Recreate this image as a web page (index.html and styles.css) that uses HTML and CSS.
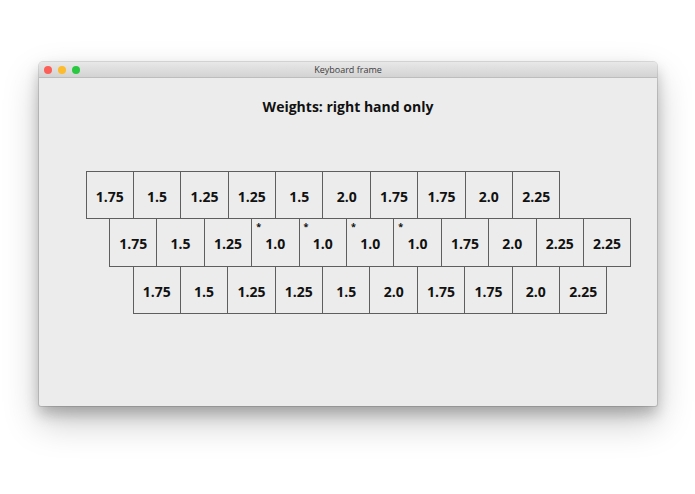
FILE: index.html
```html
<!DOCTYPE html>
<html lang="en">
<head>
  <meta charset="UTF-8">
  <meta name="viewport" content="width=device-width, initial-scale=1.0">
  <title>Keyboard frame</title>
  <link rel="stylesheet" href="styles.css">
</head>
<body>
  <div class="window">
    <div class="titlebar">
      <div class="lights">
        <span class="light red"></span>
        <span class="light yellow"></span>
        <span class="light green"></span>
      </div>
      <div class="window-title">Keyboard frame</div>
    </div>

    <div class="content">
      <div class="heading">Weights: right hand only</div>

      <div class="keyboard">
        <!-- Top row -->
        <div class="row">
          <div class="key">1.75</div>
          <div class="key">1.5</div>
          <div class="key">1.25</div>
          <div class="key">1.25</div>
          <div class="key">1.5</div>
          <div class="key">2.0</div>
          <div class="key">1.75</div>
          <div class="key">1.75</div>
          <div class="key">2.0</div>
          <div class="key">2.25</div>
        </div>

        <!-- Home row -->
        <div class="row home">
          <div class="key">1.75</div>
          <div class="key">1.5</div>
          <div class="key">1.25</div>
          <div class="key marked">1.0</div>
          <div class="key marked">1.0</div>
          <div class="key marked">1.0</div>
          <div class="key marked">1.0</div>
          <div class="key">1.75</div>
          <div class="key">2.0</div>
          <div class="key">2.25</div>
          <div class="key">2.25</div>
        </div>

        <!-- Bottom row -->
        <div class="row bottom">
          <div class="key">1.75</div>
          <div class="key">1.5</div>
          <div class="key">1.25</div>
          <div class="key">1.25</div>
          <div class="key">1.5</div>
          <div class="key">2.0</div>
          <div class="key">1.75</div>
          <div class="key">1.75</div>
          <div class="key">2.0</div>
          <div class="key">2.25</div>
        </div>
      </div>
    </div>
  </div>
</body>
</html>
```

FILE: styles.css
```css
/* Page */
html,
body {
  background-color: #ffffff;
}

body {
  margin: 0;
  padding: 0 0 88px 0;
  font-family: "Open Sans", "DejaVu Sans", sans-serif;
  color: #111;
}

/* Window frame */
.window {
  width: 618px;
  height: 344px;
  margin: 62px 0 0 39px;
  background-color: #ececec;
  border-radius: 4px 4px 2px 2px;
  box-shadow: 0 0 0 1px rgba(0, 0, 0, 0.12),
    0 8px 14px rgba(0, 0, 0, 0.22),
    0 16px 36px rgba(0, 0, 0, 0.22);
  display: flex;
  flex-direction: column;
  overflow: hidden;
}

.titlebar {
  height: 15px;
  background: linear-gradient(#e9e8e9, #d4d3d4);
  border-bottom: 1px solid #bdbdbd;
  display: flex;
  align-items: center;
  justify-content: center;
  position: relative;
}

.lights {
  position: absolute;
  left: 5px;
  top: 4px;
  display: flex;
  gap: 6px;
}

.light {
  width: 8px;
  height: 8px;
  border-radius: 50%;
}

.light.red {
  background-color: #fc5f57;
}

.light.yellow {
  background-color: #fdbb2e;
}

.light.green {
  background-color: #2ac840;
}

.window-title {
  font-size: 9px;
  color: #3c3c3c;
  line-height: 15px;
}

/* Content */
.content {
  flex: 1;
  padding-top: 19px;
}

.heading {
  text-align: center;
  font-size: 14px;
  font-weight: bold;
  line-height: 20px;
}

.keyboard {
  margin-top: 54px;
  padding-left: 46.5px;
}

.row {
  display: flex;
}

.row + .row {
  margin-top: -1px;
}

.row.home {
  padding-left: 23.5px;
}

.row.bottom {
  padding-left: 47px;
}

.key {
  position: relative;
  box-sizing: border-box;
  width: 48.4px;
  height: 48.3px;
  border: 1px solid #5e5e5e;
  display: flex;
  align-items: center;
  justify-content: center;
  padding-top: 3px;
  font-size: 14px;
  font-weight: bold;
}

.key + .key {
  margin-left: -1px;
}

.key.marked::before {
  content: "*";
  position: absolute;
  top: 3px;
  left: 4px;
  font-size: 9px;
  font-weight: bold;
  line-height: 10px;
}
```
